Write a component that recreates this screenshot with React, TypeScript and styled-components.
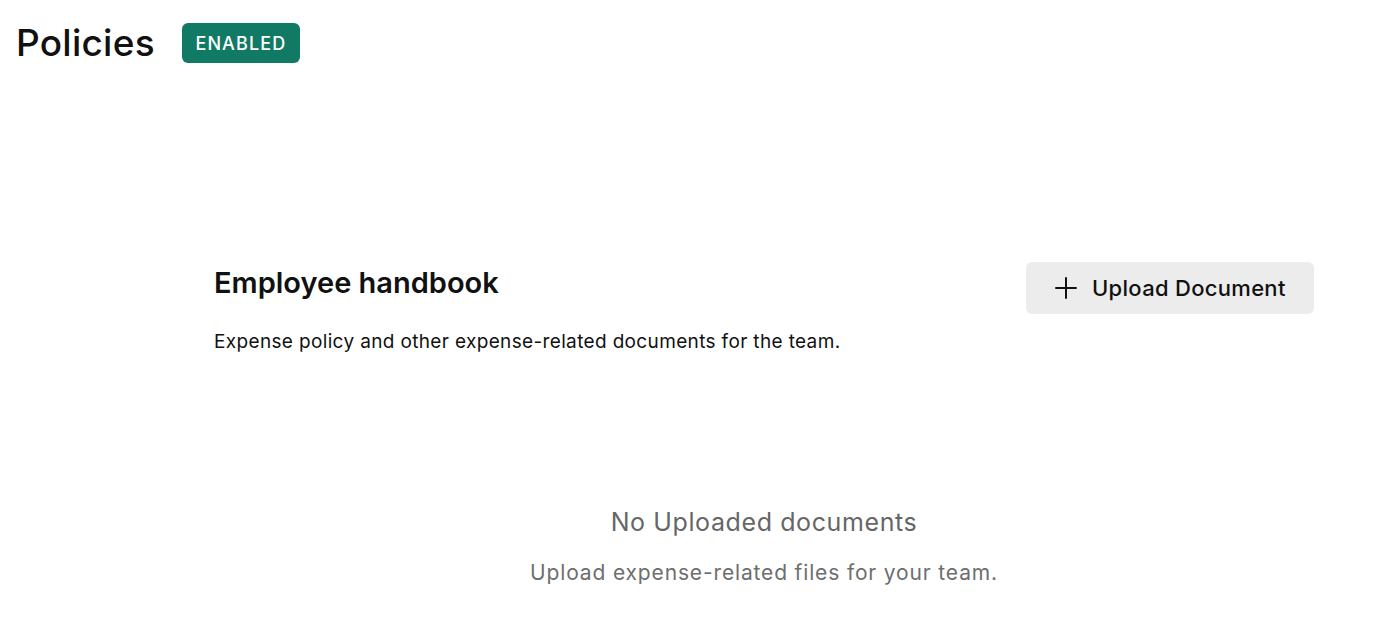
import React from "react";
import styled, { createGlobalStyle } from "styled-components";

const Global = createGlobalStyle`
  html, body { margin: 0; padding: 0; background: #ffffff; }
  body { font-family: Inter, "Noto Sans", sans-serif; color: #111111; }
`;

const Page = styled.div`
  width: 1400px;
  height: 644px;
  box-sizing: border-box;
  display: flex;
  flex-direction: column;
`;

const Header = styled.header`
  display: flex;
  align-items: center;
  gap: 27px;
  padding: 23px 0 0 16px;
  height: 40px;
`;

const PageTitle = styled.h1`
  margin: 0;
  font-size: 37px;
  font-weight: 500;
  letter-spacing: 0.25px;
  line-height: 40px;
  color: #111111;
`;

const Badge = styled.span`
  display: inline-flex;
  align-items: center;
  justify-content: center;
  width: 118px;
  height: 40px;
  box-sizing: border-box;
  border-radius: 6px;
  background: #117a65;
  color: #ffffff;
  font-size: 18px;
  font-weight: 500;
  letter-spacing: 1.1px;
`;

const Section = styled.section`
  margin: 199px 86px 0 214px;
  display: flex;
  flex-direction: column;
`;

const SectionHead = styled.div`
  display: flex;
  justify-content: space-between;
  align-items: flex-start;
`;

const HeadText = styled.div`
  display: flex;
  flex-direction: column;
  padding-top: 4px;
`;

const SectionTitle = styled.h2`
  margin: 0;
  font-size: 29px;
  font-weight: 600;
  letter-spacing: 0;
  line-height: 34px;
  color: #111111;
`;

const SectionDesc = styled.p`
  margin: 29px 0 0;
  font-size: 19px;
  letter-spacing: 0.35px;
  line-height: 26px;
  color: #111111;
`;

const UploadButton = styled.button`
  display: inline-flex;
  align-items: center;
  gap: 14px;
  width: 288px;
  height: 52px;
  padding: 0 0 0 28px;
  box-sizing: border-box;
  border: none;
  border-radius: 6px;
  background: #ececec;
  color: #111111;
  font-family: inherit;
  font-size: 22px;
  letter-spacing: 0.3px;
  font-weight: 500;
  cursor: pointer;
`;

const Empty = styled.div`
  margin-top: 152px;
  display: flex;
  flex-direction: column;
  align-items: center;
`;

const EmptyTitle = styled.div`
  font-size: 25px;
  letter-spacing: 0.6px;
  line-height: 30px;
  color: #666666;
`;

const EmptyText = styled.div`
  margin-top: 23px;
  font-size: 21px;
  letter-spacing: 0.85px;
  line-height: 26px;
  color: #6e6e6e;
`;

const PlusIcon = () => (
  <svg width="24" height="24" viewBox="0 0 24 24" fill="none" stroke="#111" strokeWidth="2" strokeLinecap="round">
    <path d="M12 2v20M2 12h20" />
  </svg>
);

export default function App() {
  return (
    <>
      <Global />
      <Page>
        <Header>
          <PageTitle>Policies</PageTitle>
          <Badge>ENABLED</Badge>
        </Header>
        <Section>
          <SectionHead>
            <HeadText>
              <SectionTitle>Employee handbook</SectionTitle>
              <SectionDesc>Expense policy and other expense-related documents for the team.</SectionDesc>
            </HeadText>
            <UploadButton>
              <PlusIcon />
              Upload Document
            </UploadButton>
          </SectionHead>
          <Empty>
            <EmptyTitle>No Uploaded documents</EmptyTitle>
            <EmptyText>Upload expense-related files for your team.</EmptyText>
          </Empty>
        </Section>
      </Page>
    </>
  );
}
